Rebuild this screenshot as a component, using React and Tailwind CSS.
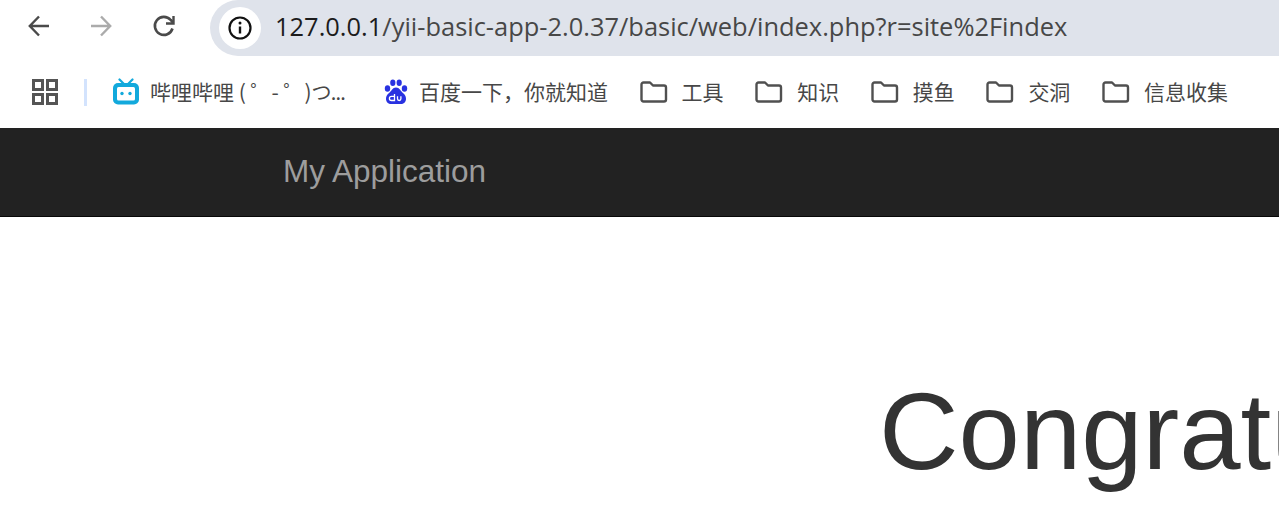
import React from 'react';

const FolderIcon = () => (
  <svg width="28" height="22" viewBox="0 0 28 22" fill="none" stroke="#505050" strokeWidth="2.400" strokeLinejoin="round" className="shrink-0">
    <path d="M1.500 3.500a2 2 0 0 1 2-2h6.500l3 3h11a2 2 0 0 1 2 2v12a2 2 0 0 1-2 2h-20.500a2 2 0 0 1-2-2z" />
  </svg>
);

const BiliIcon = () => (
  <svg width="28" height="28" viewBox="0 0 28 28" className="shrink-0">
    <path d="M7.500 1.500 L12 6 M20.500 1.500 L16 6" stroke="#12a9dc" strokeWidth="2.200" strokeLinecap="round" />
    <rect x="1" y="5" width="26" height="21.500" rx="5" fill="#12a9dc" />
    <rect x="5" y="9" width="18" height="13.500" rx="1.500" fill="#fff" />
    <circle cx="10" cy="15.500" r="1.700" fill="#12a9dc" />
    <circle cx="18" cy="15.500" r="1.700" fill="#12a9dc" />
  </svg>
);

const BaiduIcon = () => (
  <svg width="24" height="26" viewBox="0 0 24 26" className="shrink-0">
    <ellipse cx="3.500" cy="9.500" rx="2.700" ry="3.300" fill="#2932e1" />
    <ellipse cx="8.800" cy="3.800" rx="2.600" ry="3.300" fill="#2932e1" />
    <ellipse cx="15.200" cy="3.800" rx="2.600" ry="3.300" fill="#2932e1" />
    <ellipse cx="20.500" cy="9.500" rx="2.700" ry="3.300" fill="#2932e1" />
    <path d="M12 8.500c3.500 0 4.500 3.500 7 5.500 2.500 2 3 4 3 6 0 3-2.500 5-5 5H7c-2.500 0-5-2-5-5 0-2 .5-4 3-6 2.500-2 3.500-5.500 7-5.500z" fill="#2932e1" />
    <path d="M10.500 15v6.500h-3a2 2 0 0 1 0-4.200h3M13.500 17.300v2.500a1.700 1.700 0 0 0 3.400 0v-2.500" fill="none" stroke="#fff" strokeWidth="1.300" />
  </svg>
);

const folders = ['工具', '知识', '摸鱼', '交洞', '信息收集'];

const cjk = "font-['Noto_Sans_CJK_SC','Noto_Sans',sans-serif]";

export default function App() {
  return (
    <div className="h-[508px] w-[1279px] overflow-hidden bg-white">
      {/* browser toolbar */}
      <div className="flex h-14 items-start">
        <svg width="24" height="24" viewBox="0 0 24 24" fill="none" stroke="#4a4a4a" strokeWidth="2.400" className="ml-[27px] mt-[14px] shrink-0">
          <path d="M22 12H3M12 2.500 2.800 12l9.200 9.500" />
        </svg>
        <svg width="24" height="24" viewBox="0 0 24 24" fill="none" stroke="#ababab" strokeWidth="2.400" className="ml-[38px] mt-[14px] shrink-0">
          <path d="M2 12h19M12 2.500l9.200 9.500-9.200 9.500" />
        </svg>
        <svg width="24" height="24" viewBox="0 0 24 24" fill="none" stroke="#4a4a4a" strokeWidth="2.600" className="ml-[39px] mt-[14px] shrink-0">
          <path d="M20.500 14.500a9 9 0 1 1-1.800-8.500L21 8.500" />
          <path d="M21.500 2v7.500H14" strokeWidth="2.400" />
        </svg>
        <div className="ml-[34px] flex h-14 flex-1 items-center rounded-l-[28px] bg-[#dfe3eb] pl-[9px]">
          <div className="flex h-[42px] w-[42px] shrink-0 items-center justify-center rounded-full bg-white">
            <svg width="26" height="26" viewBox="0 0 26 26" fill="none" stroke="#111" strokeWidth="2.200">
              <circle cx="13" cy="13" r="10.500" />
              <path d="M13 11.500v7" strokeWidth="2.400" />
              <circle cx="13" cy="8" r="1.500" fill="#111" stroke="none" />
            </svg>
          </div>
          <div className="ml-[14px] whitespace-nowrap pb-[3px] font-['Open_Sans',sans-serif] text-[25.45px] text-[#474747]">
            <span className="text-[#1c1c1c]">127.0.0.1</span>/yii-basic-app-2.0.37/basic/web/index.php?r=site%2Findex
          </div>
        </div>
      </div>

      {/* bookmarks bar */}
      <div className={`flex h-[72px] items-center whitespace-nowrap text-[21px] text-[#474747] ${cjk}`}>
        <svg width="26" height="26" viewBox="0 0 26 26" fill="none" stroke="#555" strokeWidth="3" className="ml-[32px] shrink-0">
          <rect x="1.500" y="1.500" width="9" height="9" />
          <rect x="15.500" y="1.500" width="9" height="9" />
          <rect x="1.500" y="15.500" width="9" height="9" />
          <rect x="15.500" y="15.500" width="9" height="9" />
        </svg>
        <div className="ml-[26px] h-[27px] w-[3px] shrink-0 bg-[#d3e3fd]" />
        <div className="ml-[25px]"><BiliIcon /></div>
        <span className="ml-[10px] w-[193px]">哔哩哔哩 ( ゜- ゜)<span className="text-[20px] tracking-[-0.8px]">つ...</span></span>
        <div className="ml-[41px]"><BaiduIcon /></div>
        <span className="ml-[11px] w-[189px]">百度一下，你就知道</span>
        {folders.map((label) => (
          <div key={label} className="ml-[31.6px] flex items-center first:ml-[32.5px]">
            <FolderIcon />
            <span className="ml-[14px]">{label}</span>
          </div>
        ))}
      </div>

      {/* app navbar */}
      <div className="flex h-[89px] items-center border-b border-[#080808] bg-[#222222] pb-[1px] pl-[283px]">
        <span className="font-['Liberation_Sans',sans-serif] text-[31.5px] text-[#9d9d9d]">My Application</span>
      </div>

      {/* jumbotron */}
      <div className="whitespace-nowrap pl-[879px] pt-[148px] font-['Liberation_Sans',sans-serif] text-[110.25px] leading-[132px] text-[#333333]">
        Congratulations!
      </div>
    </div>
  );
}
